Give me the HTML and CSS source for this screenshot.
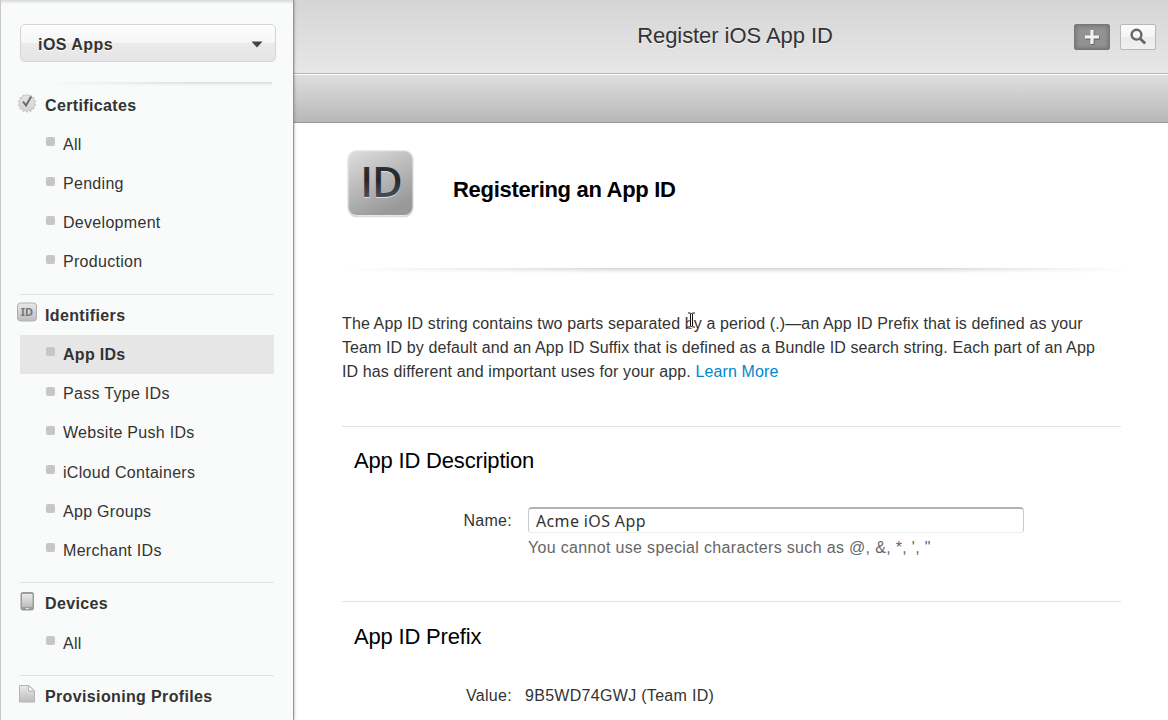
FILE: index.html
```html
<!DOCTYPE html>
<html lang="en">
<head>
<meta charset="utf-8">
<title>Register iOS App ID</title>
<link rel="stylesheet" href="styles.css">
</head>
<body>
<div class="app">
  <nav class="sidebar">
    <button class="picker"><span>iOS Apps</span><svg width="12" height="7" viewBox="0 0 12 7"><path d="M.5.5h11L6 6.5z" fill="#444"/></svg></button>
    <div class="side-rule"></div>
    <section class="group first">
      <h2><svg class="g-icon" width="20" height="20" viewBox="0 0 20 20"><defs><linearGradient id="gi" x1="0" y1="0" x2="0" y2="1"><stop offset="0" stop-color="#e9e9ea"/><stop offset="1" stop-color="#bdbdc0"/></linearGradient><linearGradient id="seal" x1="0" y1="0" x2="0" y2="1"><stop offset="0" stop-color="#e6e6e7"/><stop offset="1" stop-color="#d2d2d4"/></linearGradient></defs><path d="M10 1l1.600 2 2.300-1.100.6 2.500 2.600.1-.5 2.500 2.300 1.200-1.600 2 1.600 2-2.300 1.200.5 2.500-2.600.1-.6 2.500-2.300-1.100L10 19.400l-1.600-2-2.300 1.100-.6-2.500-2.600-.1.500-2.500-2.300-1.200 1.600-2-1.600-2 2.300-1.200-.5-2.500 2.600-.1.600-2.500 2.300 1.100z" fill="url(#seal)" stroke="#bcbcbe" stroke-width=".8"/><path d="M6 8.500l3 4L14.200 3.500" fill="none" stroke="#6b6b6b" stroke-width="2"/></svg>Certificates</h2>
      <ul><li>All</li><li>Pending</li><li>Development</li><li>Production</li></ul>
    </section>
    <section class="group">
      <h2><svg class="g-icon" width="20" height="20" viewBox="0 0 20 20"><rect x=".5" y="1" width="19" height="18" rx="3" fill="url(#gi)" stroke="#b0b0b2"/><text class="id-small" x="10" y="14" text-anchor="middle">ID</text></svg>Identifiers</h2>
      <ul><li class="current">App IDs</li><li>Pass Type IDs</li><li>Website Push IDs</li><li>iCloud Containers</li><li>App Groups</li><li>Merchant IDs</li></ul>
    </section>
    <section class="group">
      <h2><svg class="g-icon" width="20" height="20" viewBox="0 0 20 20"><rect x="4" y="1.500" width="12.500" height="17.500" rx="1.500" fill="#9c9ca2" stroke="#98989e"/><rect x="5" y="3" width="10.500" height="13" fill="url(#gi)"/><path d="M9 17.500h2.500" stroke="#eee"/></svg>Devices</h2>
      <ul><li>All</li></ul>
    </section>
    <section class="group">
      <h2><svg class="g-icon" width="20" height="20" viewBox="0 0 20 20"><path d="M2.500 1.500h9.500l5.500 5.500v11H2.500z" fill="url(#gi)" stroke="#b4b4b9"/><path d="M11.500 1.500v5.500h6z" fill="#f8f8f8" stroke="#b4b4b9"/></svg>Provisioning Profiles</h2>
    </section>
  </nav>
  <div class="main">
    <header class="titlebar">
      <h1>Register iOS App ID</h1>
      <div class="actions">
        <button class="add"><svg width="18" height="18" viewBox="0 0 18 18"><path d="M9 2.500v14M2 9.500h14" stroke="#666" stroke-width="3.400" transform="translate(.8 .6)"/><path d="M9 2v14M2 9h14" stroke="#f2f2f2" stroke-width="3.200"/></svg></button>
        <button class="find"><svg width="18" height="18" viewBox="0 0 18 18"><circle cx="7.500" cy="6.700" r="4.900" fill="none" stroke="#666" stroke-width="2.400"/><path d="M11 10.500l5.200 5" stroke="#666" stroke-width="2.800"/></svg></button>
      </div>
    </header>
    <div class="toolbar"></div>
    <main class="content">
      <div class="hero">
        <svg width="68" height="68" viewBox="0 0 68 68"><defs><linearGradient id="tile" x1="0" y1="0" x2=".5" y2="1"><stop offset="0" stop-color="#dedede"/><stop offset="1" stop-color="#999"/></linearGradient><linearGradient id="ink" x1="0" y1="0" x2="0" y2="1"><stop offset="0" stop-color="#353a40"/><stop offset=".5" stop-color="#22272c"/><stop offset="1" stop-color="#666b70"/></linearGradient></defs><rect x=".2" y=".2" width="66.600" height="67" rx="9.500" fill="#d9d9d9"/><rect x=".2" y=".2" width="66.600" height="65.600" rx="9.500" fill="#ececec"/><rect x="1.500" y="1.300" width="64" height="63.700" rx="8" fill="url(#tile)"/><text class="id-large shine" x="34" y="47.500" text-anchor="middle">ID</text><text class="id-large" x="34" y="46.500" text-anchor="middle" fill="url(#ink)">ID</text></svg>
        <h2>Registering an App ID</h2>
      </div>
      <div class="hero-rule"></div>
      <p class="intro"><span>The App ID string contains two parts separated by a period (.)—an App ID Prefix that is defined as your</span> <span class="tight">Team ID by default and an App ID Suffix that is defined as a Bundle ID search string. Each part of an App</span> <span>ID has different and important uses for your app. <a>Learn More</a></span></p>
      <section class="panel description">
        <h3>App ID Description</h3>
        <div class="field"><label>Name:</label><div class="control"><input type="text" value="Acme iOS App"><p>You cannot use special characters such as @, &amp;, *, ', "</p></div></div>
      </section>
      <section class="panel prefix">
        <h3>App ID Prefix</h3>
        <div class="field value"><label>Value:</label><span>9B5WD74GWJ (Team ID)</span></div>
      </section>
    </main>
  </div>
  <svg class="cursor" width="11" height="18" viewBox="0 0 11 18"><path d="M2 2.500h3l.5.5.5-.5h3M5.500 3v12M2 15.500h3l.5-.5.5.5h3" fill="none" stroke="#fff" stroke-width="3.500"/><path d="M2 2h2.500l1 1 1-1H9M2 16h2.500l1-1 1 1H9M4.500 3v12M6.500 3v12" fill="none" stroke="#111"/></svg>
</div>
</body>
</html>
```
FILE: styles.css
```css
* { box-sizing: border-box; }
body { margin: 0; overflow: hidden; font: 16px "Liberation Sans", Arial, sans-serif; color: #333; background: #fff; }
h1, h2, h3, p, ul { margin: 0; padding: 0; font-weight: normal; }
button { padding: 0; font: inherit; color: inherit; }
.app { position: relative; display: flex; width: 1168px; height: 720px; overflow: hidden; }

.sidebar { position: relative; z-index: 1; flex: none; width: 294px; height: 720px; padding: 24px 19px 0; background: linear-gradient(#d8d8d8, #f9fbfa 4px); border-left: 1px solid #c8c8c8; border-right: 1px solid #959595; box-shadow: 0 0 3px rgba(0,0,0,.35); }
.picker { display: flex; justify-content: space-between; align-items: center; width: 256px; height: 38px; padding: 3px 12px 0 17px; border: 1px solid #d5d5d5; border-radius: 5px; background: linear-gradient(#fdfdfd, #f5f5f5 50%, #ebebeb 50%, #e5e5e5); font-weight: bold; letter-spacing: .45px; text-shadow: 0 1px #fff; }
.side-rule { width: 252px; height: 4px; margin-top: 20px; background: linear-gradient(90deg, #f9fbfa 10%, rgba(249,251,250,0) 65%), linear-gradient(#dcdedd, #f9fbfa); }
.group { width: 254px; margin-top: 12.4px; border-top: 1px solid #e0e2e1; }
.group.first { margin-top: -1.2px; border-top-color: transparent; }
.group h2 { display: flex; align-items: center; gap: 8px; height: 40px; margin-left: -3px; padding-top: 2px; font-size: 16px; font-weight: bold; letter-spacing: .36px; }
.group.first h2 { height: 39px; }
.g-icon { margin-top: -7px; }
.group ul { list-style: none; }
.group li { display: flex; align-items: center; height: 39.2px; padding: 1px 0 0 26px; letter-spacing: .3px; }
.group li::before { content: ""; width: 9px; height: 9px; margin: -6px 8px 0 0; border-radius: 2px; background: #c6c6ca; }
.group .current { padding-top: 0; background: #e6e6e6; font-weight: bold; }
.id-small { font: bold 11px "Noto Sans", sans-serif; letter-spacing: 0; fill: #777; }
.id-large { font: 600 42px "Open Sans", "Noto Sans", sans-serif; letter-spacing: -1px; }
.shine { fill: #ddd; }

.main { flex: 1; min-width: 0; }
.titlebar { position: relative; display: flex; justify-content: center; height: 74px; padding: 23px 0 0 8px; background: linear-gradient(#d5d5d5, #e7e7e7); border-bottom: 1px solid #b5b5b5; }
.titlebar h1 { font-size: 22px; line-height: 26px; letter-spacing: -.06px; text-shadow: 0 1px #f2f2f2; }
.actions { position: absolute; top: 24px; right: 12px; display: flex; gap: 10px; }
.actions button { display: flex; align-items: center; justify-content: center; width: 36px; height: 26px; border-radius: 2px; }
.add { border: 1px solid #777; background: #929292; box-shadow: inset 0 0 5px #666; }
.find { border: 1px solid #b8b8b8; background: linear-gradient(#fbfbfb, #f4f4f4 50%, #ebebeb 50%, #f1f1f1); }
.toolbar { height: 49px; border-top: 1px solid #fff; border-bottom: 1px solid #989898; background: linear-gradient(#dedede, #b8b8b8); }
.content { padding: 27px 47px 0 48px; }
.hero { display: flex; gap: 38px; margin-left: 5px; }
.hero h2 { padding-top: 27px; font-size: 22px; line-height: 26px; font-weight: bold; letter-spacing: -.3px; color: #000; }
.hero-rule { width: 788px; height: 5px; margin-top: 50px; background: linear-gradient(90deg, #fff, rgba(255,255,255,0) 35%, rgba(255,255,255,0) 75%, #fff), linear-gradient(#d5d5d5, #fff); }
.intro { margin-top: 39px; line-height: 24px; }
.intro span { display: block; white-space: nowrap; letter-spacing: .12px; }
.intro .tight { letter-spacing: .1px; }
.intro a { color: #08c; }
.panel { width: 779px; height: 175px; padding-top: 21px; border-top: 1px solid #e3e3e3; }
.description { margin-top: 42px; }
.prefix { padding-top: 22px; }
.panel h3 { padding-left: 12px; font-size: 22px; line-height: 26px; letter-spacing: -.18px; color: #000; }
.field { display: flex; margin-top: 33px; }
.field label { width: 170px; padding-top: 5px; text-align: right; line-height: 18px; letter-spacing: .3px; }
.control { margin-left: 16px; }
.control input { display: block; width: 496px; height: 26px; padding: 1px 7px 0; border: 1px solid #ccc; border-top: 2px solid #b2b2b2; border-bottom-color: #eee; border-radius: 4px; background: #fff; color: #333; font: 16px "Noto Sans", sans-serif; letter-spacing: .36px; outline: 0; }
.control p { margin-top: 5px; line-height: 20px; letter-spacing: .33px; color: #666; white-space: nowrap; }
.prefix .field label { padding-top: 4px; }
.value span { margin-left: 13px; padding-top: 4px; line-height: 18px; letter-spacing: .3px; }
.cursor { position: absolute; left: 686px; top: 311px; }
```
